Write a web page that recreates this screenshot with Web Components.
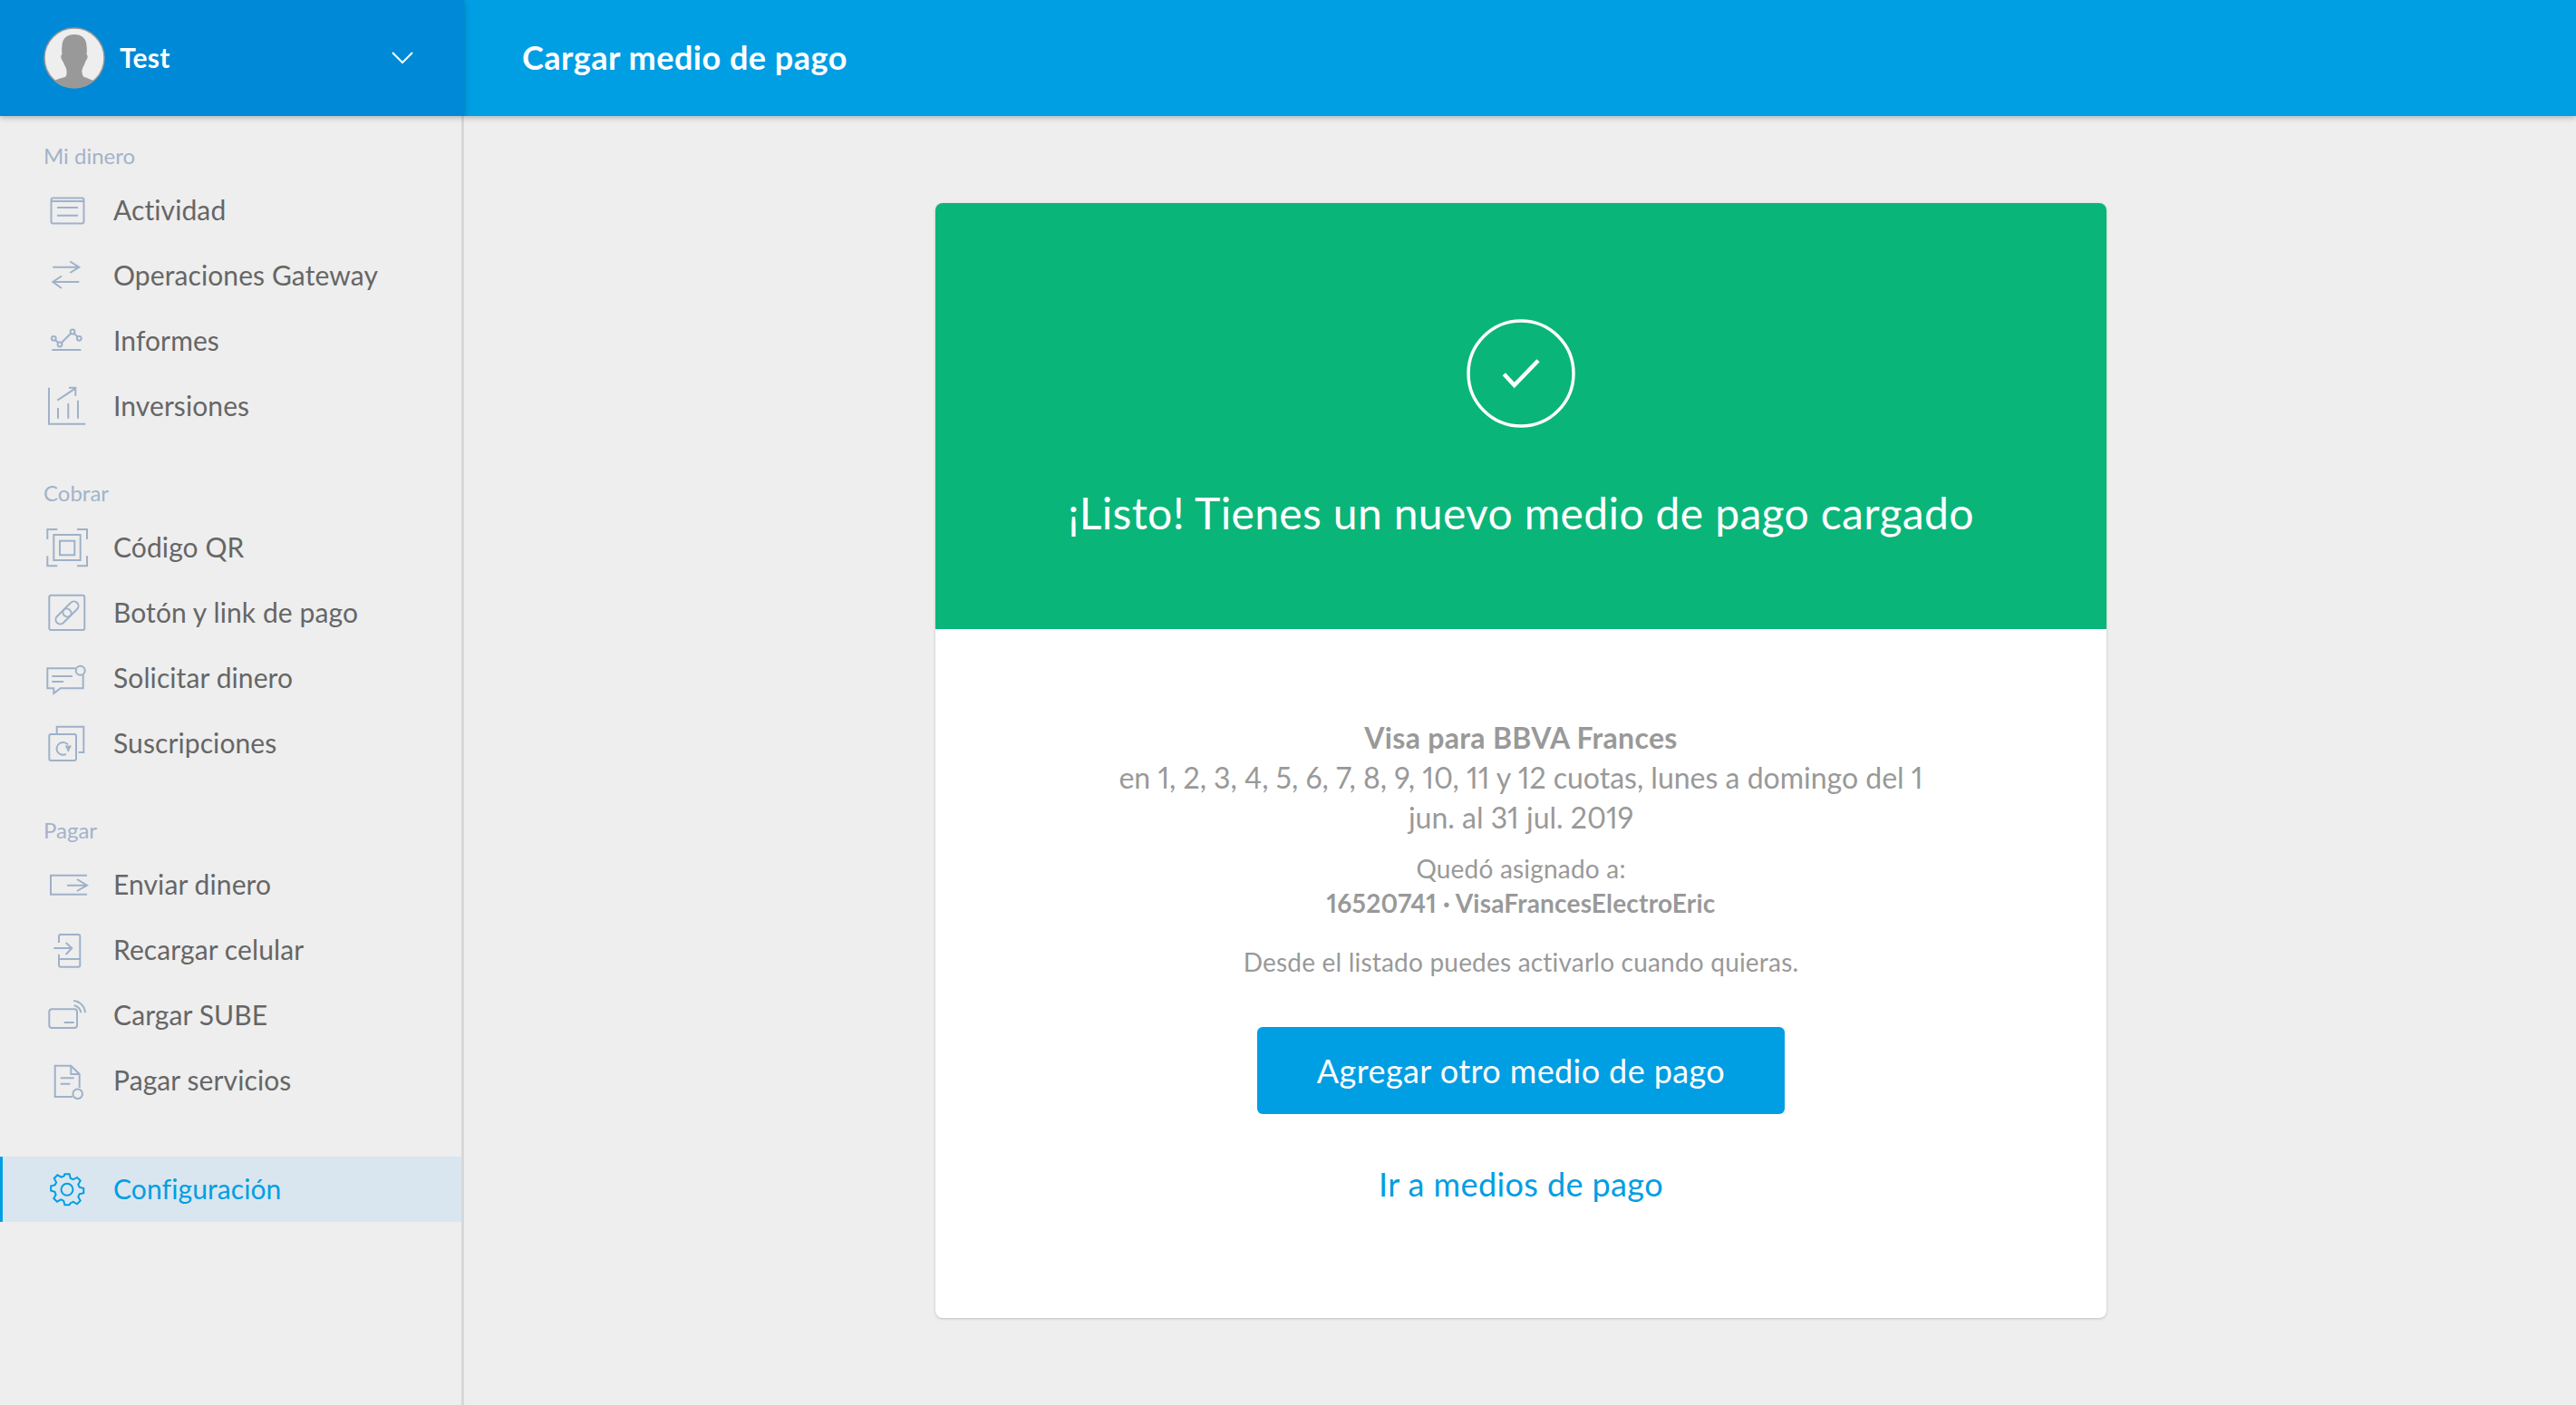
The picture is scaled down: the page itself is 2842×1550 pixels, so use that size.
<!DOCTYPE html>
<html lang="es">
<head>
<meta charset="utf-8">
<title>Cargar medio de pago</title>
<style>
    html, body { margin: 0; height: 100%; }
    body { font-family: Lato, "Liberation Sans", sans-serif; background: #eeeeee; font-variant-numeric: proportional-nums; }
    card-summary b { letter-spacing: .3px; }
</style>
</head>
<body>
<app-shell>
    <user-menu slot="user" name="Test"></user-menu>
    <top-bar slot="bar">Cargar medio de pago</top-bar>

    <side-nav slot="nav">
        <nav-section label="Mi dinero">
            <nav-item>
                <svg slot="icon" viewBox="0 0 48 48"><rect x="6.5" y="10.5" width="36" height="28" rx="2"/><path d="M7 14h35M13 21h23M13 29.700h23"/></svg>
                Actividad
            </nav-item>
            <nav-item>
                <svg slot="icon" viewBox="0 0 48 48"><path d="M8.300 14.700h29M27.300 8.500l10 6.200-10 6.300M37.300 31H8.300M18 24.500L8.300 31l9.700 7"/></svg>
                Operaciones Gateway
            </nav-item>
            <nav-item>
                <svg slot="icon" viewBox="0 0 48 48"><path d="M7.300 34h32"/><circle cx="9.300" cy="21.300" r="2.400"/><circle cx="16" cy="28" r="2.400"/><circle cx="30" cy="14" r="2.400"/><circle cx="37.300" cy="21.300" r="2.400"/><path d="M11 23l3.300 3.300M17.700 26.300L28.300 15.700M31.700 15.700l3.900 3.900"/></svg>
                Informes
            </nav-item>
            <nav-item>
                <svg slot="icon" viewBox="0 0 48 48"><path d="M4 3.700v40h40.300M13.300 17.700l20-13.400M26 3.700h7.300v9M14 26v11.700M25.300 21v16.700M36 17.700v20"/></svg>
                Inversiones
            </nav-item>
        </nav-section>

        <nav-section label="Cobrar">
            <nav-item>
                <svg slot="icon" viewBox="0 0 48 48"><path d="M13.300 4H2.300v11M35 4h11v11M2.300 33.300v11h11M46 33.300v11H35"/><rect x="9.300" y="10" width="29.400" height="28"/><rect x="16" y="16.700" width="16.300" height="15.600"/></svg>
                Código QR
            </nav-item>
            <nav-item>
                <svg slot="icon" viewBox="0 0 48 48"><rect x="4.300" y="4.700" width="39" height="38.300" rx="2"/><rect x="10" y="23" width="20" height="10" rx="5" transform="rotate(-45 20 28)"/><rect x="18" y="15" width="20" height="10" rx="5" transform="rotate(-45 28 20)"/></svg>
                Botón y link de pago
            </nav-item>
            <nav-item>
                <svg slot="icon" viewBox="0 0 48 48"><path d="M33.500 13.300H2.300v22h7V41l7.400-5.700h25V20.500M7.300 22H30M7.300 28H20"/><circle cx="38.700" cy="15.700" r="5"/></svg>
                Solicitar dinero
            </nav-item>
            <nav-item>
                <svg slot="icon" viewBox="0 0 48 48"><path d="M12.700 13V5.700h29.600V34h-5.600"/><rect x="4.300" y="14" width="29.700" height="29" rx="2"/><path d="M25 25.500c-2-2.500-6-3.300-9-1.500-3.500 2-4.500 6.500-2.500 9.500 2 3 6 4 9.500 2.500"/><path d="M21.700 26.500H29L25.300 34z" style="fill:#9fb1c9;stroke:none"/></svg>
                Suscripciones
            </nav-item>
        </nav-section>

        <nav-section label="Pagar">
            <nav-item>
                <svg slot="icon" viewBox="0 0 48 48"><path d="M46 13.700H6v21h40M24 24.700h22M35 18l11 6.700L35 31"/></svg>
                Enviar dinero
            </nav-item>
            <nav-item>
                <svg slot="icon" viewBox="0 0 48 48"><path d="M15 16V9c0-1 1-2 2-2h19.300c1 0 2 1 2 2v31.700c0 1-1 2-2 2H17c-1 0-2-1-2-2V29M15 34h23.300M9.300 22h20M22.700 16l6.600 6-6.600 7"/></svg>
                Recargar celular
            </nav-item>
            <nav-item>
                <svg slot="icon" viewBox="0 0 48 48"><rect x="4.300" y="17.300" width="30.700" height="20.700" rx="3"/><path d="M20.700 32h11M31.700 13.300c4 .5 7.300 4 7.600 8M31 8c7 .5 12.500 6 13 13.300"/></svg>
                Cargar SUBE
            </nav-item>
            <nav-item>
                <svg slot="icon" viewBox="0 0 48 48"><path d="M37.700 32V17l-9.400-9.300H10.700V42H30M28.300 7.700V17h9.400M16.700 21.300h15M16.700 27.700h10.600"/><circle cx="35.700" cy="38.700" r="5.300"/></svg>
                Pagar servicios
            </nav-item>
        </nav-section>

        <nav-item active style="margin-top: 48px">
            <svg slot="icon" viewBox="0 0 48 48"><circle cx="24" cy="24.300" r="6.500"/><path transform="translate(24 24.300) scale(.85) translate(-24 -24)" stroke-width="2.350" d="M21 4h6l1.500 5.500 3.500 1.500 5-2.800 4.300 4.300-2.800 5 1.500 3.500 5.500 1.500v6l-5.500 1.500-1.500 3.500 2.800 5-4.300 4.300-5-2.800-3.500 1.500L27 44h-6l-1.500-5.500-3.500-1.500-5 2.800-4.300-4.300 2.800-5-1.500-3.500L3 25.500v-6l5.500-1.500 1.500-3.500-2.800-5 4.300-4.300 5 2.800 3.500-1.500z"/></svg>
            Configuración
        </nav-item>
    </side-nav>

    <result-card slot="main" heading="¡Listo! Tienes un nuevo medio de pago cargado">
        <card-summary>
            <b>Visa para BBVA Frances</b><br>
            en 1, 2, 3, 4, 5, 6, 7, 8, 9, 10, 11 y 12 cuotas, lunes a domingo del 1<br>
            jun. al 31 jul. 2019
        </card-summary>
        <card-note>
            Quedó asignado a:<br>
            <b>16520741 · VisaFrancesElectroEric</b>
        </card-note>
        <card-note gap>Desde el listado puedes activarlo cuando quieras.</card-note>
        <action-button>Agregar otro medio de pago</action-button>
        <action-button link>Ir a medios de pago</action-button>
    </result-card>
</app-shell>

<script>
// small helper so each class only has to hand over its markup
function shadow(el, html) {
    el.attachShadow({ mode: 'open' }).innerHTML = html;
}

class AppShell extends HTMLElement {
    constructor() {
        super();
        shadow(this, `
            <style>
                :host { display: grid; grid-template-columns: 512px 1fr; grid-template-rows: 128px 1fr; height: 100vh; overflow: hidden; }
                .user { grid-column: 1; grid-row: 1; z-index: 3; }
                .bar { grid-column: 2; grid-row: 1; z-index: 2; }
                .nav { grid-column: 1; grid-row: 2; }
                .main { grid-column: 2; grid-row: 2; display: flex; justify-content: center; align-items: flex-start; padding: 96px 0 0 2px; }
            </style>
            <div class="user"><slot name="user"></slot></div>
            <div class="bar"><slot name="bar"></slot></div>
            <div class="nav"><slot name="nav"></slot></div>
            <div class="main"><slot name="main"></slot></div>
        `);
    }
}

class UserMenu extends HTMLElement {
    constructor() {
        super();
        shadow(this, `
            <style>
                :host { display: flex; align-items: center; height: 128px; box-sizing: border-box; padding: 0 56px 0 48px; background: #0089d6; color: #fff; box-shadow: 0 2px 6px rgba(0,0,0,.25); }
                .pic { width: 68px; height: 68px; flex: none; }
                .name { flex: 1; margin: 0 0 2px 16px; font-size: 30px; font-weight: 700; letter-spacing: .2px; }
                .arrow { width: 24px; height: 14px; fill: none; stroke: #fff; stroke-width: 2; }
            </style>
            <svg class="pic" viewBox="0 0 68 68">
                <circle cx="34" cy="34" r="33" fill="#eeeeee" stroke="#999" stroke-width="1.500"/>
                <path fill="#999" d="M34 8C42 8 47 12 47.500 20C48 25 48 27 47.500 30C49 31 49 33 48 35C47 37 46 38 45.500 40C44 44 42 46 42.500 50C43 54 44 55 48 56C50 57 53 58 55 59C49 65 41 67 34 67C25 67 17 65 12 59C15 57 20 56 24 55C25 54 26 52 25.500 48C25 44 23 42 22 39C21 37 20 36 19.500 34C19 32 19 31 20.500 30C20 26 20 24 20.500 20C21 12 26 8 34 8z"/>
            </svg>
            <span class="name">${this.getAttribute('name')}</span>
            <svg class="arrow" viewBox="0 0 24 14"><path d="M1 1l11 11L23 1"/></svg>
        `);
    }
}

class TopBar extends HTMLElement {
    constructor() {
        super();
        shadow(this, `
            <style>
                :host { display: flex; align-items: center; height: 128px; box-sizing: border-box; padding: 0 0 2px 64px; background: #009ee3; color: #fff; font-size: 36px; font-weight: 700; letter-spacing: .5px; box-shadow: 0 2px 6px rgba(0,0,0,.25); }
            </style>
            <slot></slot>
        `);
    }
}

class SideNav extends HTMLElement {
    constructor() {
        super();
        shadow(this, `
            <style>
                :host { display: block; box-sizing: border-box; height: 100%; padding-top: 28px; border-right: 3px solid #d8d8d8; }
            </style>
            <slot></slot>
        `);
    }
}

class NavSection extends HTMLElement {
    constructor() {
        super();
        shadow(this, `
            <style>
                :host { display: block; margin-bottom: 44px; }
                .label { height: 32px; line-height: 32px; margin-bottom: 8px; padding-left: 48px; font-size: 24px; color: #a3b3c9; }
            </style>
            <div class="label">${this.getAttribute('label')}</div>
            <slot></slot>
        `);
    }
}

class NavItem extends HTMLElement {
    constructor() {
        super();
        shadow(this, `
            <style>
                :host { display: flex; align-items: center; height: 72px; box-sizing: border-box; padding-left: 50px; font-size: 30px; letter-spacing: .1px; color: #666; }
                :host([active]) { background: #d9e6f0; color: #009ee3; border-left: 3px solid #009ee3; padding-left: 47px; }
                .icon { width: 48px; height: 48px; flex: none; margin-right: 27px; }
                .text { margin-bottom: 2px; }
                ::slotted(svg) { display: block; width: 48px; height: 48px; fill: none; stroke: #9fb1c9; stroke-width: 2; }
                :host([active]) ::slotted(svg) { stroke: #009ee3; }
            </style>
            <span class="icon"><slot name="icon"></slot></span>
            <span class="text"><slot></slot></span>
        `);
    }
}

class ResultCard extends HTMLElement {
    constructor() {
        super();
        shadow(this, `
            <style>
                :host { display: block; width: 1292px; border-radius: 8px; background: #fff; overflow: hidden; box-shadow: 0 1px 3px rgba(0,0,0,.2); text-align: center; }
                .head { height: 470px; box-sizing: border-box; padding-top: 128px; background: #0ab579; color: #fff; }
                .check { display: block; width: 120px; height: 120px; margin: 0 auto; fill: none; stroke: #fff; }
                h1 { margin: 66px 0 0; font-size: 48px; font-weight: 400; line-height: 56px; letter-spacing: .35px; }
                .body { box-sizing: border-box; height: 760px; padding: 98px 150px 0; }
            </style>
            <div class="head">
                <svg class="check" viewBox="0 0 120 120"><circle cx="60" cy="60" r="58" stroke-width="3.500"/><path d="M41.300 60.700L52.700 73 79 45.700" stroke-width="4.500"/></svg>
                <h1>${this.getAttribute('heading')}</h1>
            </div>
            <div class="body"><slot></slot></div>
        `);
    }
}

class CardSummary extends HTMLElement {
    constructor() {
        super();
        shadow(this, `
            <style>
                :host { display: block; font-size: 32px; line-height: 44px; color: #999; }
            </style>
            <slot></slot>
        `);
    }
}

class CardNote extends HTMLElement {
    constructor() {
        super();
        shadow(this, `
            <style>
                :host { display: block; margin-top: 15px; font-size: 28px; line-height: 38px; letter-spacing: .2px; color: #999; }
                :host([gap]) { margin-top: 27px; }
            </style>
            <slot></slot>
        `);
    }
}

class ActionButton extends HTMLElement {
    constructor() {
        super();
        shadow(this, `
            <style>
                :host { display: flex; align-items: center; justify-content: center; width: 582px; height: 96px; margin: 53px auto 0; border-radius: 6px; background: #009ee3; color: #fff; font-size: 36px; letter-spacing: .4px; }
                :host([link]) { background: none; color: #009ee3; margin-top: 29px; }
            </style>
            <slot></slot>
        `);
    }
}

customElements.define('app-shell', AppShell);
customElements.define('user-menu', UserMenu);
customElements.define('top-bar', TopBar);
customElements.define('side-nav', SideNav);
customElements.define('nav-section', NavSection);
customElements.define('nav-item', NavItem);
customElements.define('result-card', ResultCard);
customElements.define('card-summary', CardSummary);
customElements.define('card-note', CardNote);
customElements.define('action-button', ActionButton);
</script>
</body>
</html>
